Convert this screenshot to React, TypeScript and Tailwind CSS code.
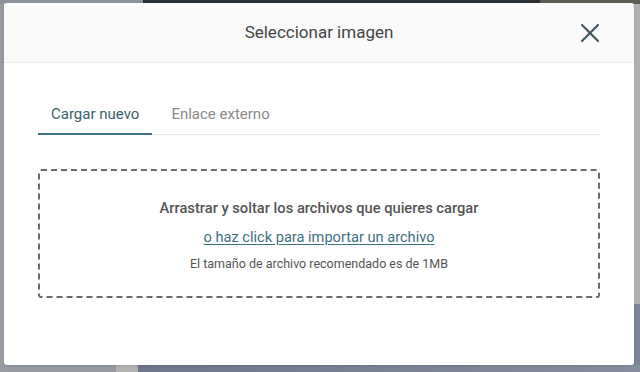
import { X } from "lucide-react";

const Backdrop = () => (
  <div className="flex h-full w-full flex-col">
    <div className="flex h-[4px]">
      <div className="w-[143px] bg-[#8f949a]" />
      <div className="w-[397px] bg-[#2a2f33]" />
      <div className="flex-1 bg-[#5b5e52]" />
    </div>
    <div className="flex flex-1">
      <div className="w-[634px] bg-[#979ca2]" />
      <div className="flex flex-1 flex-col">
        <div className="h-[300px] bg-[#b1b1b1]" />
        <div className="flex-1 bg-[#7b8596]" />
      </div>
    </div>
    <div className="flex h-[7px]">
      <div className="w-[116px] bg-[#979ca2]" />
      <div className="w-[22px] bg-[#b3b3b3]" />
      <div className="flex-1 bg-gradient-to-r from-[#6d7788] to-[#878e9c]" />
    </div>
  </div>
);

const Tabs = () => (
  <div className="mt-[33px] flex gap-[6px] border-b border-[#e6e6e6]">
    <button className="-mb-px flex h-[39px] items-center border-b-2 border-[#3f7280] px-[13px] text-[15px] text-[#3b5f6b]">
      Cargar nuevo
    </button>
    <button className="-mb-px flex h-[39px] items-center border-b-2 border-transparent px-[13px] text-[15px] text-[#8a8a8a]">
      Enlace externo
    </button>
  </div>
);

const DropZone = () => (
  <div className="mt-[34px] flex h-[129px] flex-col items-center justify-center rounded-[3px] border-2 border-dashed border-[#6b6b6b] pt-[2px] text-[#555]">
    <p className="text-[14.7px] font-medium leading-[20px]">
      Arrastrar y soltar los archivos que quieres cargar
    </p>
    <a className="mt-[9px] text-[14.6px] leading-[20px] text-[#3f7280] underline underline-offset-2">
      o haz click para importar un archivo
    </a>
    <p className="mt-[8px] text-[12.5px] leading-[17px]">
      El tamaño de archivo recomendado es de 1MB
    </p>
  </div>
);

export default function App() {
  return (
    <div className="relative h-[372px] w-[640px] overflow-hidden font-['Roboto',sans-serif]">
      <Backdrop />
      <div className="absolute left-[4px] top-[3px] h-[362px] w-[630px] overflow-hidden rounded-[3px] bg-white shadow-sm">
        <div className="relative flex h-[60px] items-center justify-center border-b border-[#ebebeb] bg-[#fafafa]">
          <h2 className="text-[17px] text-[#454545]">Seleccionar imagen</h2>
          <button className="absolute right-[28px] top-[14px] text-[#44555e]">
            <X size={32} strokeWidth={1.6} />
          </button>
        </div>
        <div className="px-[34px]">
          <Tabs />
          <DropZone />
        </div>
      </div>
    </div>
  );
}
